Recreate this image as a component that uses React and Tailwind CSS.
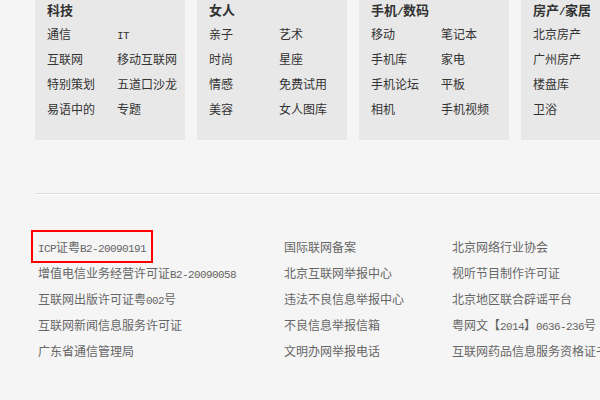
import React from "react";

const Mixed = ({ text }) => {
  const parts = text.split(/([\x00-\x7F]+)/).filter((p) => p.length);
  return (
    <>
      {parts.map((p, i) =>
        /^[\x00-\x7F]+$/.test(p) ? (
          <span
            key={i}
            className="font-['Liberation_Mono',monospace] text-[11px] tracking-[-0.6px]"
          >
            {p}
          </span>
        ) : (
          <span key={i}>{p}</span>
        )
      )}
    </>
  );
};

const boxes = [
  { title: "科技", cols: 2, items: ["通信", "IT", "互联网", "移动互联网", "特别策划", "五道口沙龙", "易语中的", "专题"] },
  { title: "女人", cols: 2, items: ["亲子", "艺术", "时尚", "星座", "情感", "免费试用", "美容", "女人图库"] },
  { title: "手机/数码", cols: 2, items: ["移动", "笔记本", "手机库", "家电", "手机论坛", "平板", "相机", "手机视频"] },
  { title: "房产/家居", cols: 1, items: ["北京房产", "广州房产", "楼盘库", "卫浴"] },
];

const col1 = [
  "ICP证粤B2-20090191",
  "增值电信业务经营许可证B2-20090058",
  "互联网出版许可证粤002号",
  "互联网新闻信息服务许可证",
  "广东省通信管理局",
];
const col2 = ["国际联网备案", "北京互联网举报中心", "违法不良信息举报中心", "不良信息举报信箱", "文明办网举报电话"];
const col3 = ["北京网络行业协会", "视听节目制作许可证", "北京地区联合辟谣平台", "粤网文【2014】0636-236号", "互联网药品信息服务资格证书"];

export default function App() {
  return (
    <div className="w-[600px] h-[400px] overflow-hidden bg-[#f5f5f5] font-['Noto_Sans_CJK_SC',sans-serif] text-[12px]">
      <div className="flex gap-3 pl-[35px]">
        {boxes.map((b) => (
          <div key={b.title} className="w-[150px] shrink-0 bg-[#e8e8e8] pl-3 pb-[19px]">
            <div className="h-[19px] leading-[19px] text-[13px] font-bold text-[#333] whitespace-nowrap">
              <Mixed text={b.title} />
            </div>
            <div className={b.cols === 2 ? "grid grid-cols-[70px_70px] pt-[2px]" : "grid grid-cols-[70px] pt-[2px]"}>
              {b.items.map((it) => (
                <div key={it} className="h-[25px] leading-[25px] text-[#333] whitespace-nowrap">
                  <Mixed text={it} />
                </div>
              ))}
            </div>
          </div>
        ))}
      </div>

      <div className="mt-[53px] ml-[35px]">
        <div className="h-px bg-[#dddddd]" />
        <div className="h-px bg-white" />
      </div>

      <div className="mt-[39px] pl-[38px] flex text-[#666]">
        <div className="w-[246px] shrink-0 flex flex-col">
          {col1.map((t, i) => (
            <div key={t} className="h-[26px] leading-[26px] whitespace-nowrap">
              {i === 0 ? (
                <span className="relative inline-block">
                  <Mixed text={t} />
                  <span className="absolute -top-[4px] -left-[7px] -right-[7px] -bottom-[1px] border-2 border-[#ff0000]" />
                </span>
              ) : (
                <Mixed text={t} />
              )}
            </div>
          ))}
        </div>
        <div className="w-[168px] shrink-0 flex flex-col">
          {col2.map((t) => (
            <div key={t} className="h-[26px] leading-[26px] whitespace-nowrap">
              <Mixed text={t} />
            </div>
          ))}
        </div>
        <div className="min-w-0 flex-1 overflow-hidden flex flex-col">
          {col3.map((t) => (
            <div key={t} className="h-[26px] leading-[26px] whitespace-nowrap">
              <Mixed text={t} />
            </div>
          ))}
        </div>
      </div>
    </div>
  );
}
